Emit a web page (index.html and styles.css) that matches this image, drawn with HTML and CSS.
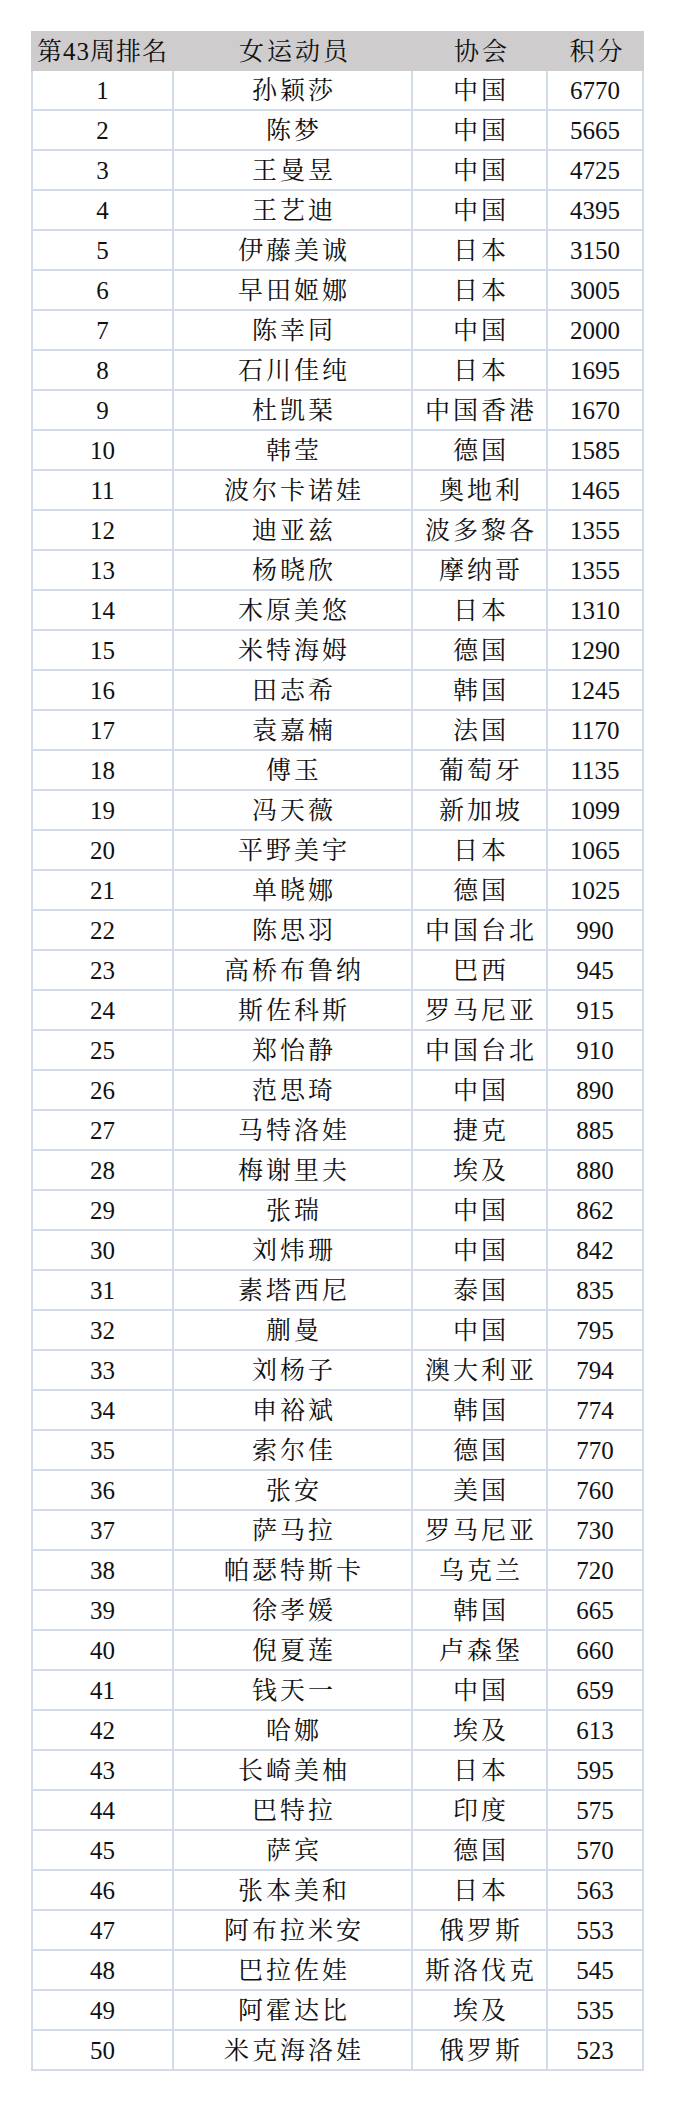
FILE: index.html
```html
<!DOCTYPE html>
<html lang="zh-CN">
<head>
<meta charset="utf-8">
<title>第43周女子排名</title>
<link rel="stylesheet" href="styles.css">
</head>
<body>
<div class="page">
  <div class="ranking" id="ranking">
    <div class="cell head">第43周排名</div>
    <div class="cell head zh">女运动员</div>
    <div class="cell head zh">协会</div>
    <div class="cell head zh">积分</div>
  </div>
</div>
<script src="script.js"></script>
</body>
</html>
```
FILE: script.js
```js
const rows = [
  [1,"孙颖莎","中国",6770],[2,"陈梦","中国",5665],[3,"王曼昱","中国",4725],[4,"王艺迪","中国",4395],
  [5,"伊藤美诚","日本",3150],[6,"早田姬娜","日本",3005],[7,"陈幸同","中国",2000],[8,"石川佳纯","日本",1695],
  [9,"杜凯琹","中国香港",1670],[10,"韩莹","德国",1585],[11,"波尔卡诺娃","奥地利",1465],[12,"迪亚兹","波多黎各",1355],
  [13,"杨晓欣","摩纳哥",1355],[14,"木原美悠","日本",1310],[15,"米特海姆","德国",1290],[16,"田志希","韩国",1245],
  [17,"袁嘉楠","法国",1170],[18,"傅玉","葡萄牙",1135],[19,"冯天薇","新加坡",1099],[20,"平野美宇","日本",1065],
  [21,"单晓娜","德国",1025],[22,"陈思羽","中国台北",990],[23,"高桥布鲁纳","巴西",945],[24,"斯佐科斯","罗马尼亚",915],
  [25,"郑怡静","中国台北",910],[26,"范思琦","中国",890],[27,"马特洛娃","捷克",885],[28,"梅谢里夫","埃及",880],
  [29,"张瑞","中国",862],[30,"刘炜珊","中国",842],[31,"素塔西尼","泰国",835],[32,"蒯曼","中国",795],
  [33,"刘杨子","澳大利亚",794],[34,"申裕斌","韩国",774],[35,"索尔佳","德国",770],[36,"张安","美国",760],
  [37,"萨马拉","罗马尼亚",730],[38,"帕瑟特斯卡","乌克兰",720],[39,"徐孝媛","韩国",665],[40,"倪夏莲","卢森堡",660],
  [41,"钱天一","中国",659],[42,"哈娜","埃及",613],[43,"长崎美柚","日本",595],[44,"巴特拉","印度",575],
  [45,"萨宾","德国",570],[46,"张本美和","日本",563],[47,"阿布拉米安","俄罗斯",553],[48,"巴拉佐娃","斯洛伐克",545],
  [49,"阿霍达比","埃及",535],[50,"米克海洛娃","俄罗斯",523]
];
const table = document.getElementById("ranking");
for (const [rank, name, assoc, pts] of rows) {
  const cells = [[rank, "cell num first"], [name, "cell zh"], [assoc, "cell zh"], [pts, "cell num"]];
  for (const [text, cls] of cells) {
    const d = document.createElement("div");
    d.className = cls;
    d.textContent = text;
    table.appendChild(d);
  }
}
```
FILE: styles.css
```css
html, body {
  margin: 0;
  padding: 0;
  background: #ffffff;
}

.page {
  padding: 31px 0 0 31px;
}

.ranking {
  display: grid;
  grid-template-columns: 143px 239px 135px 96px;
  grid-auto-rows: 40px;
  width: 613px;
  font-family: "Liberation Serif", "Noto Serif CJK SC", "Noto Sans CJK SC", serif;
  font-size: 25px;
  color: #111111;
}

.cell {
  box-sizing: border-box;
  display: flex;
  align-items: center;
  justify-content: center;
  border-right: 2px solid #d4dbe8;
  border-bottom: 2px solid #d4dbe8;
  white-space: nowrap;
  line-height: 1;
}

.cell.first {
  border-left: 2px solid #d4dbe8;
}

.cell.head {
  background: #cecccd;
  border-color: #cecccd;
  border-left: none;
  border-right: none;
  border-bottom: none;
}

.zh {
  letter-spacing: 3px;
  padding-left: 3px;
}

.head:first-child {
  letter-spacing: 1px;
}
```
